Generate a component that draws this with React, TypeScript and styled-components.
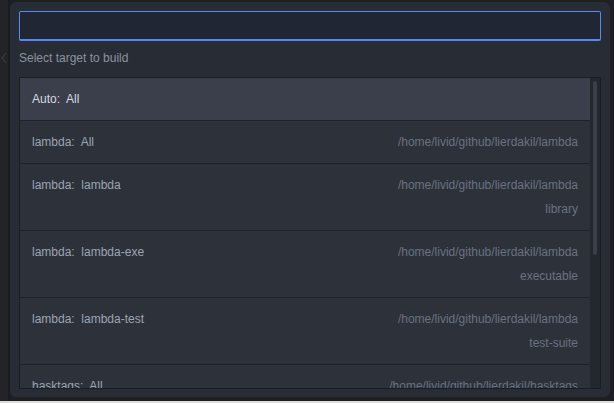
import React from "react";
import styled, { createGlobalStyle } from "styled-components";

const Global = createGlobalStyle`
  html, body { margin: 0; padding: 0; background: #dcdcdc; }
  body { font-family: "Liberation Sans", Arial, sans-serif; }
  * { box-sizing: border-box; }
`;

const Frame = styled.div`
  width: 614px;
  height: 401px;
  background: #1d1f23;
  display: flex;
  overflow: hidden;
`;

const Gutter = styled.div`
  width: 10px;
  flex: none;
  background: #222428;
  border-right: 2px solid #1b1c20;
  padding-top: 52px;
  display: flex;
  justify-content: center;
  align-items: flex-start;
`;

const Panel = styled.div`
  width: 600px;
  height: 395px;
  margin-top: 2px;
  flex: none;
  background: #282c34;
  border-radius: 6px;
  padding: 9px 9px 8px 9px;
  display: flex;
  flex-direction: column;
`;

const Input = styled.div`
  height: 30px;
  background: #212634;
  border: 1px solid #568af2;
  border-bottom-width: 2px;
  border-radius: 2px;
  flex: none;
`;

const Hint = styled.div`
  margin: 7px 0 9px 0;
  line-height: 20px;
  font-size: 12px;
  color: #8c93a0;
`;

const List = styled.div`
  flex: 1;
  border: 1px solid #1b1d23;
  display: flex;
  overflow: hidden;
  min-height: 0;
`;

const Items = styled.div`
  flex: 1;
  display: flex;
  flex-direction: column;
  overflow: hidden;
`;

const Row = styled.div<{ $selected?: boolean }>`
  flex: none;
  display: flex;
  justify-content: space-between;
  padding: 9px 12px 9px 12px;
  line-height: 24px;
  font-size: 12px;
  background: ${(p) => (p.$selected ? "#3a3f4b" : "#2c313a")};
  border-bottom: 1px solid #1f2228;
`;

const Label = styled.div<{ $selected?: boolean }>`
  white-space: pre;
  color: ${(p) => (p.$selected ? "#d7dae0" : "#9da5b4")};
`;

const Meta = styled.div`
  display: flex;
  flex-direction: column;
  align-items: flex-end;
  color: #6b7280;
  white-space: pre;
`;

const Track = styled.div`
  width: 10px;
  flex: none;
  background: #23272e;
  padding: 3px 3px 0 3px;
`;

const Thumb = styled.div`
  width: 4px;
  height: 174px;
  border-radius: 2px;
  background: #3a3f4b;
`;

type Item = { label: string; path?: string; kind?: string; selected?: boolean };

const items: Item[] = [
  { label: "Auto:  All", selected: true },
  { label: "lambda:  All", path: "/home/livid/github/lierdakil/lambda" },
  { label: "lambda:  lambda", path: "/home/livid/github/lierdakil/lambda", kind: "library" },
  { label: "lambda:  lambda-exe", path: "/home/livid/github/lierdakil/lambda", kind: "executable" },
  { label: "lambda:  lambda-test", path: "/home/livid/github/lierdakil/lambda", kind: "test-suite" },
  { label: "hasktags:  All", path: "/home/livid/github/lierdakil/hasktags" },
];

export default function App() {
  return (
    <>
      <Global />
      <Frame>
        <Gutter>
          <svg width="6" height="12" viewBox="0 0 6 12">
            <path d="M5 1 L1 6 L5 11" stroke="#393c42" strokeWidth="1.2" fill="none" />
          </svg>
        </Gutter>
        <Panel>
          <Input />
          <Hint>Select target to build</Hint>
          <List>
            <Items>
              {items.map((it, i) => (
                <Row key={i} $selected={it.selected}>
                  <Label $selected={it.selected}>{it.label}</Label>
                  {it.path && (
                    <Meta>
                      <span>{it.path}</span>
                      {it.kind && <span>{it.kind}</span>}
                    </Meta>
                  )}
                </Row>
              ))}
            </Items>
            <Track>
              <Thumb />
            </Track>
          </List>
        </Panel>
      </Frame>
    </>
  );
}
